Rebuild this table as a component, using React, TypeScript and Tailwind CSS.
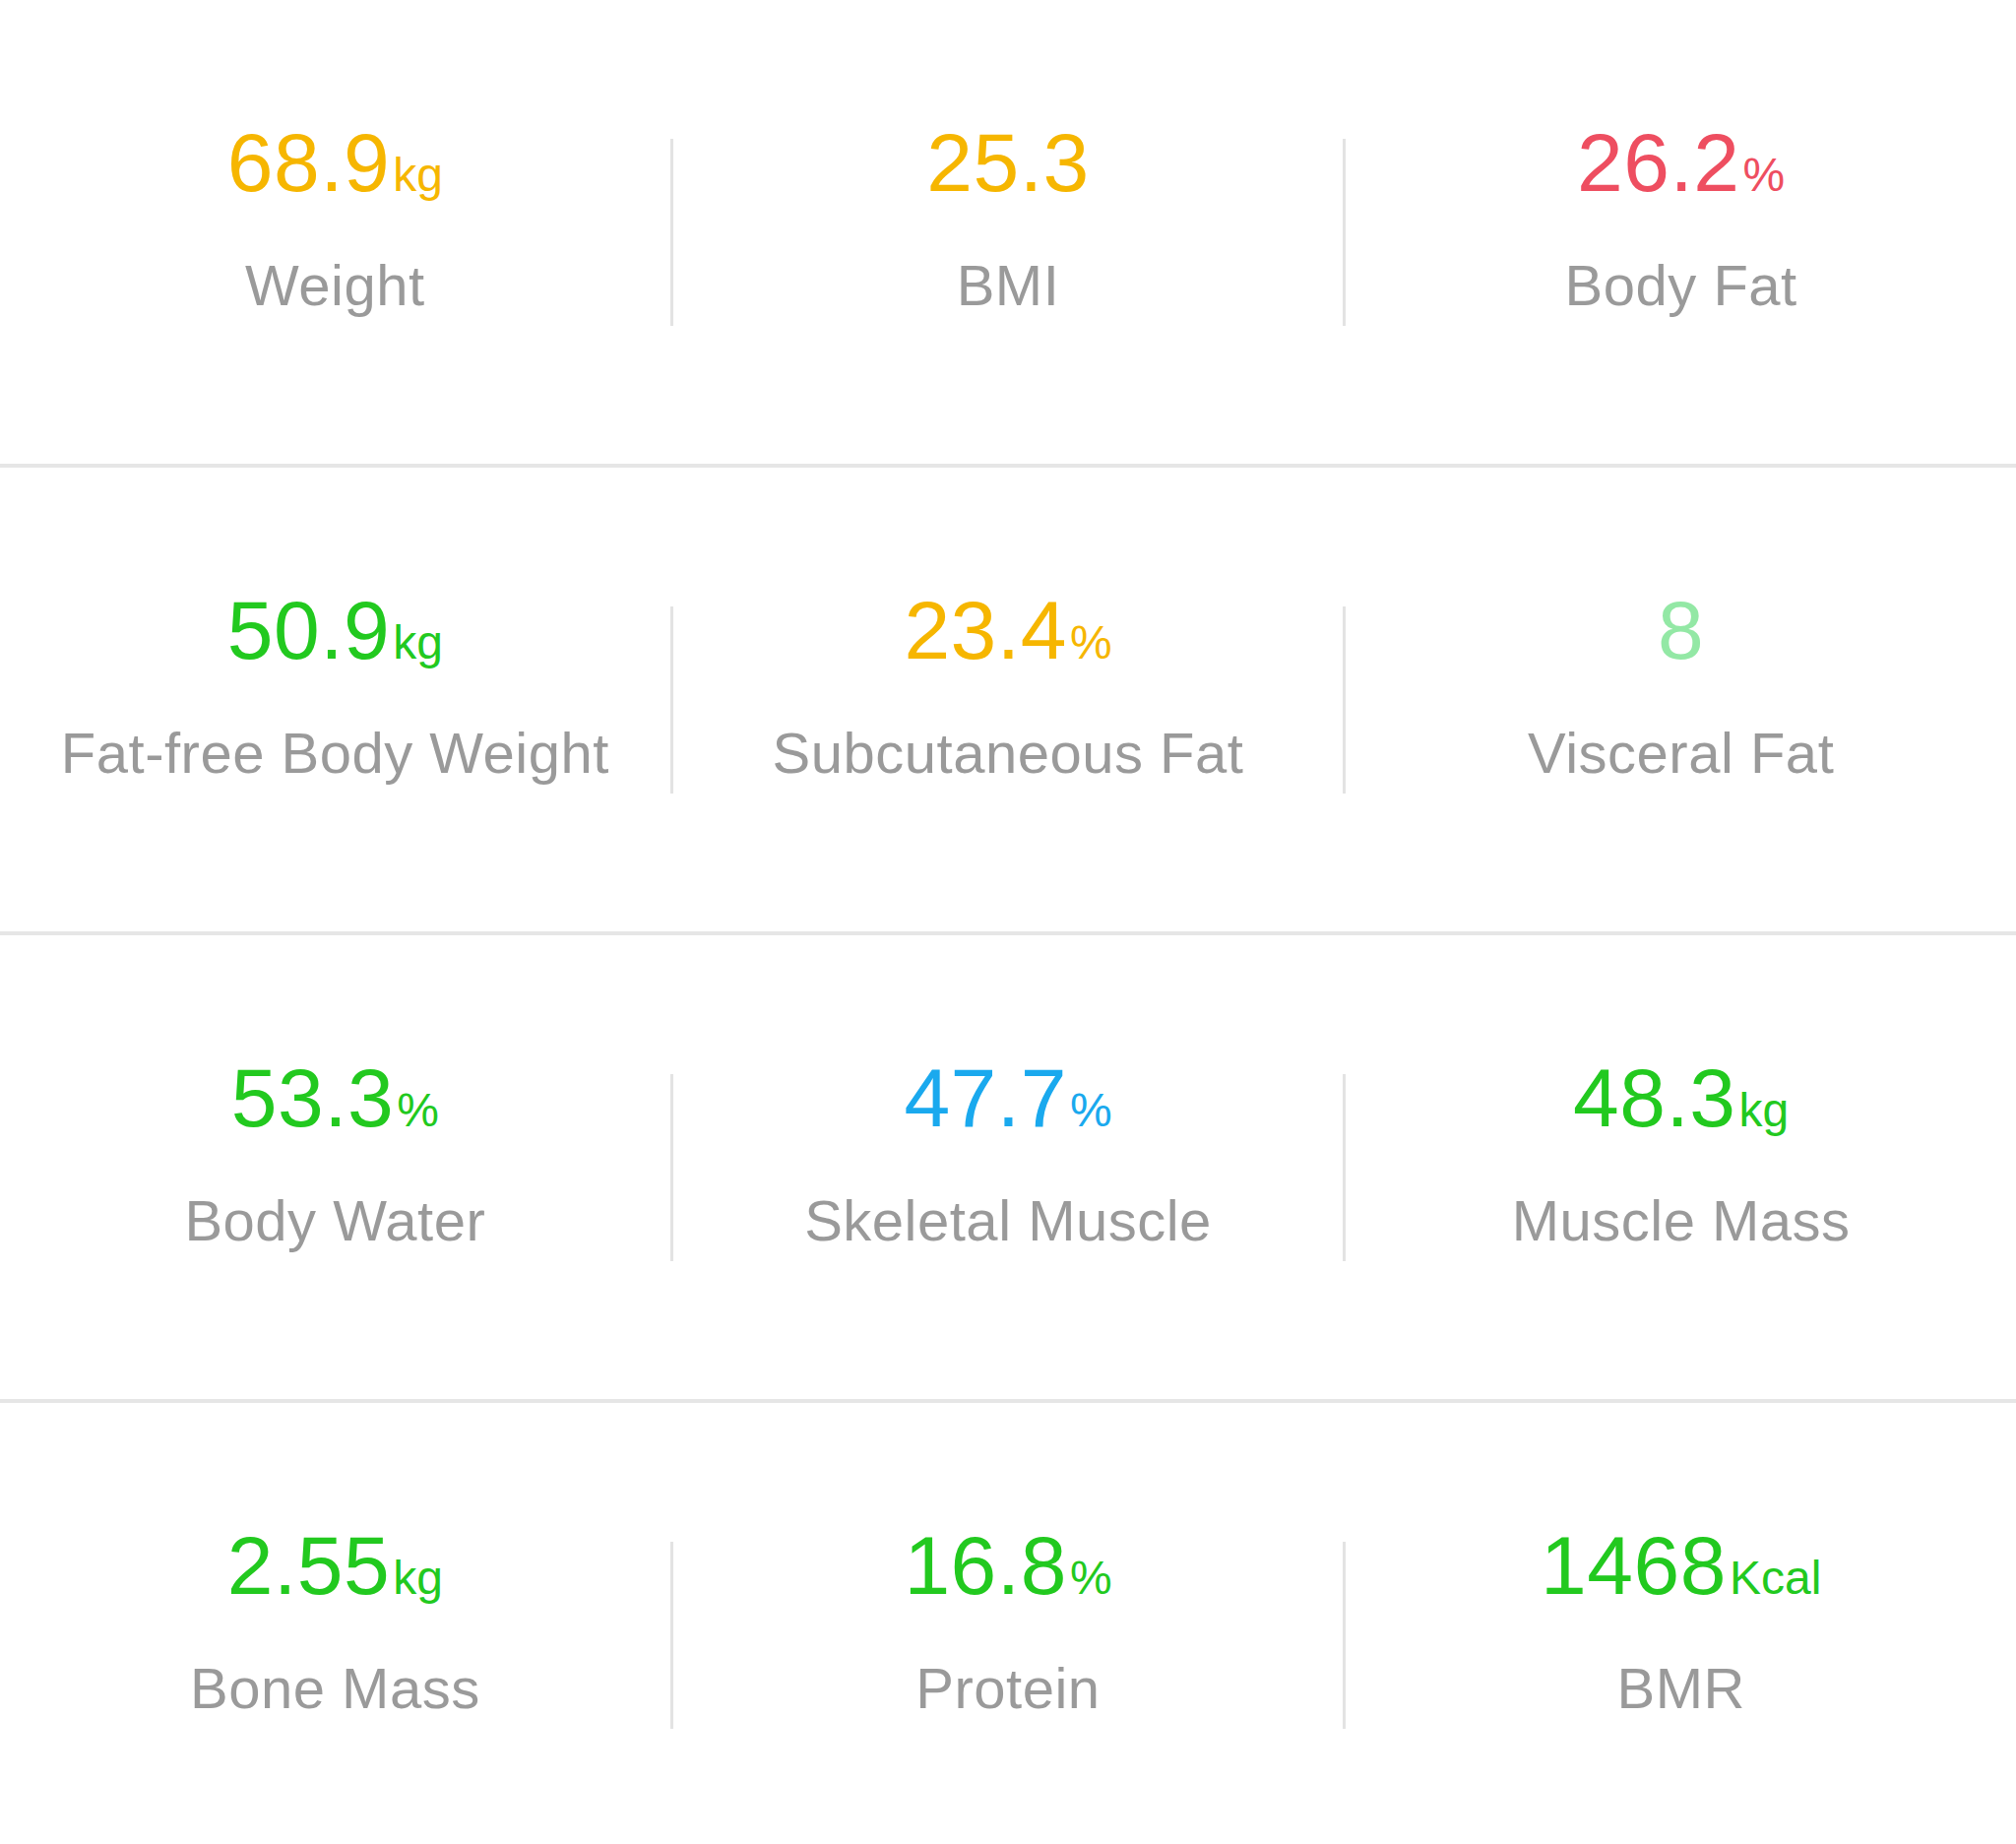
type Metric = {
    value: string
    unit?: string
    label: string
    color: string
}

const rows: Metric[][] = [
    [
        { value: "68.9", unit: "kg", label: "Weight", color: "text-[#f6b600]" },
        { value: "25.3", label: "BMI", color: "text-[#f6b600]" },
        { value: "26.2", unit: "%", label: "Body Fat", color: "text-[#ee4e60]" },
    ],
    [
        { value: "50.9", unit: "kg", label: "Fat-free Body Weight", color: "text-[#22c91f]" },
        { value: "23.4", unit: "%", label: "Subcutaneous Fat", color: "text-[#f6b600]" },
        { value: "8", label: "Visceral Fat", color: "text-[#93e8a5]" },
    ],
    [
        { value: "53.3", unit: "%", label: "Body Water", color: "text-[#22c91f]" },
        { value: "47.7", unit: "%", label: "Skeletal Muscle", color: "text-[#1aa9ee]" },
        { value: "48.3", unit: "kg", label: "Muscle Mass", color: "text-[#22c91f]" },
    ],
    [
        { value: "2.55", unit: "kg", label: "Bone Mass", color: "text-[#22c91f]" },
        { value: "16.8", unit: "%", label: "Protein", color: "text-[#22c91f]" },
        { value: "1468", unit: "Kcal", label: "BMR", color: "text-[#22c91f]" },
    ],
]

const Cell = ({ m }: { m: Metric }) => (
    <div className="flex-1 flex flex-col items-center">
        <div className={`leading-none ${m.color}`}>
            <span className="text-[84px] tracking-[0.5px]">{m.value}</span>
            {m.unit && <span className="text-[48px] ml-[3px]">{m.unit}</span>}
        </div>
        <div className="mt-[54px] text-[58px] leading-none text-[#9a9a9a] tracking-[0.5px]">{m.label}</div>
    </div>
)

const Divider = () => <div className="w-[3px] h-[190px] bg-[#e3e3e3] mt-[30px]" />

export default function App() {
    return (
        <div className="w-[2048px] h-[1873px] bg-white overflow-hidden" style={{ fontFamily: '"Liberation Sans", Arial, sans-serif' }}>
            {rows.map((row, i) => (
                <div key={i} className="h-[475px] flex items-center pb-[30px] border-b-4 border-[#e6e6e6]">
                    <Cell m={row[0]} />
                    <Divider />
                    <Cell m={row[1]} />
                    <Divider />
                    <Cell m={row[2]} />
                </div>
            ))}
        </div>
    )
}
